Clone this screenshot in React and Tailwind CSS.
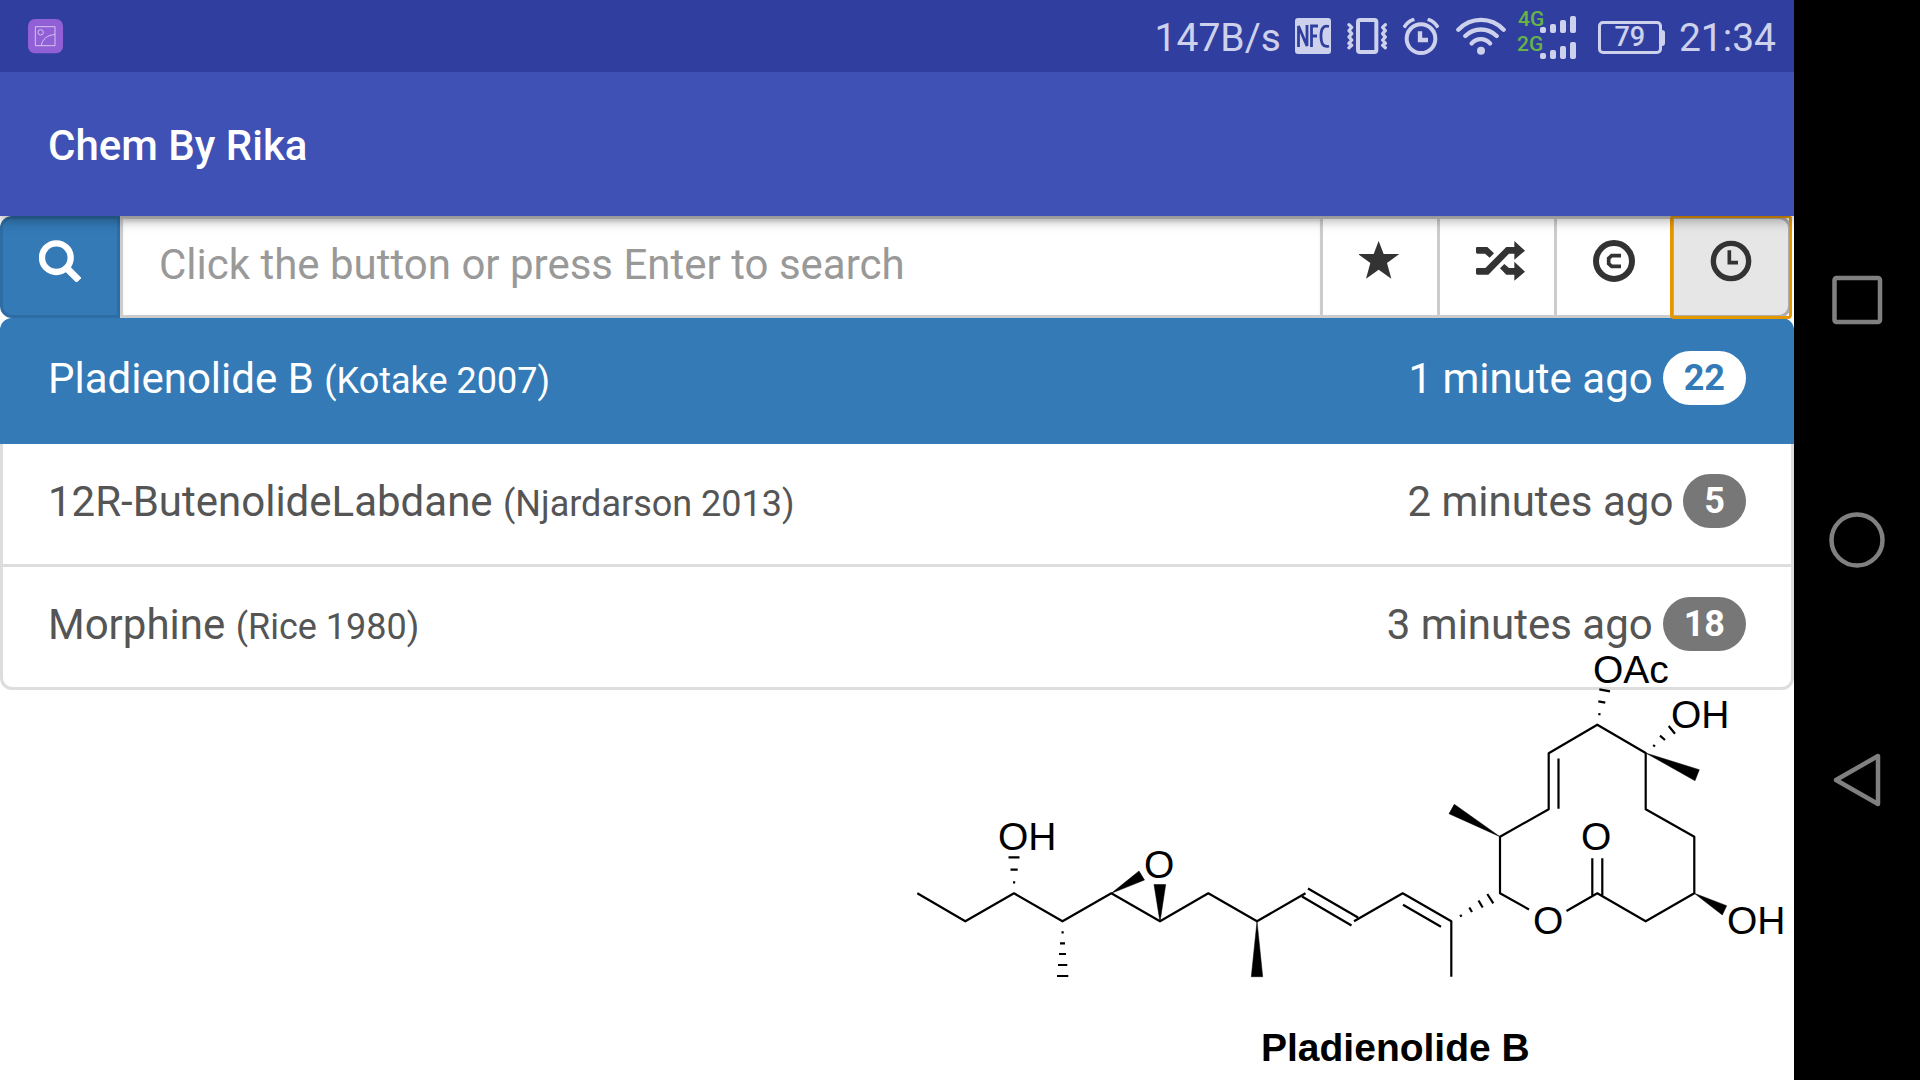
const history = [
  { name: 'Pladienolide B', source: '(Kotake 2007)', when: '1 minute ago', steps: 22, active: true },
  { name: '12R-ButenolideLabdane', source: '(Njardarson 2013)', when: '2 minutes ago', steps: 5 },
  { name: 'Morphine', source: '(Rice 1980)', when: '3 minutes ago', steps: 18 },
];

function StatusBar() {
  return (
    <div className="relative z-20 flex h-[72px] items-center bg-[#303f9f] pr-[18px] pl-7 text-[39px] leading-[60px] text-[#ced1eb]">
      <svg className="mr-auto size-[35px]" viewBox="0 0 105 105" fill="none" stroke="#d2c4ec" strokeWidth="3">
        <rect width="105" height="103" rx="21" fill="#9160d6" stroke="none" />
        <path d="M22 23H81V80H22ZM40 80C42 60 60 47 81 47" />
        <circle cx="38" cy="40" r="8" />
      </svg>
      <span className="pt-[3px]">147B/s</span>
      <svg className="ml-[14px] size-9" viewBox="0 0 36 36">
        <rect width="36" height="36" rx="3" fill="currentColor" />
        <path d="M3.500 29V8L12 28V7M16.500 29V8H23M16.500 18H22M34 8.500C28 7 26 11 26 18S28 30 34 28" fill="none" stroke="#303f9f" strokeWidth="2.800" />
      </svg>
      <svg className="ml-4 h-9 w-10" viewBox="0 0 120 108" fill="none" stroke="currentColor" strokeWidth="10" strokeLinejoin="round" strokeLinecap="round">
        <rect x="33" y="6" width="55" height="96" rx="6" strokeWidth="12" />
        <path d="M6 20l8 8-8 10 8 9-8 10 8 9-8 10 8 6-8 7M115 20l-8 8 8 10-8 9 8 10-8 9 8 10-8 6 8 7" />
      </svg>
      <svg className="ml-4 h-[37px] w-9" viewBox="0 0 108 111" fill="none" stroke="currentColor">
        <circle cx="54" cy="62" r="43" strokeWidth="12" />
        <path d="M51 40V66H75" strokeWidth="13" />
        <path d="M3 29C9 18 20 8 34 4M105 29C99 18 88 8 74 4" strokeWidth="11" />
      </svg>
      <svg className="ml-[17px] h-[38px] w-[50px]" viewBox="0 0 150 114" fill="none" stroke="currentColor" strokeWidth="13" strokeLinecap="round">
        <path d="M7 38C45 -1 105 -1 143 38M28 57C55 31 95 31 122 57M47 79C62 62 87 62 102 79" />
        <circle cx="75" cy="101" r="12" fill="currentColor" stroke="none" />
      </svg>
      <svg className="ml-[11px] h-[60px] w-[60px]" viewBox="0 0 60 60" fill="currentColor">
        <g fill="#66b447" fontFamily="Roboto, sans-serif" fontSize="21" fontWeight="500">
          <text x="1" y="20">4G</text>
          <text x="0" y="45">2G</text>
        </g>
        <rect x="23" y="21" width="6" height="6" rx="2" />
        <rect x="33" y="18" width="6" height="9" rx="2" />
        <rect x="43" y="14" width="6" height="13" rx="2" />
        <rect x="53" y="10" width="6" height="17" rx="2" />
        <rect x="23" y="47" width="6" height="6" rx="2" />
        <rect x="33" y="44" width="6" height="9" rx="2" />
        <rect x="43" y="40" width="6" height="13" rx="2" />
        <rect x="53" y="36" width="6" height="17" rx="2" />
      </svg>
      <div className="ml-[21px] flex items-center pt-[3px]">
        <span className="flex h-[33px] w-16 items-center justify-center rounded-[5px] border-[3px] border-current text-[27px] leading-[27px] font-medium">79</span>
        <span className="h-4 w-[3px] rounded-r-sm bg-current" />
      </div>
      <span className="ml-[14px] pt-[3px]">21:34</span>
    </div>
  );
}

function SearchIcon() {
  return (
    <svg className="size-[42px]" viewBox="0 0 126 126" fill="none" stroke="currentColor">
      <circle cx="52" cy="53" r="43" strokeWidth="19" />
      <path d="M82 83L120 121" strokeWidth="21" />
    </svg>
  );
}

function StarIcon() {
  return (
    <svg className="size-[42px]" viewBox="4 0 126 126" fill="currentColor">
      <path d="M63 3L78 42H125L88 69L101 116L63 89L25 116L38 69L1 42H48Z" />
    </svg>
  );
}

function RandomIcon() {
  return (
    <svg className="size-[42px] overflow-visible" viewBox="0 0 126 126" fill="currentColor">
      <path d="M0 24Q0 21 4 21H34L54 40L41 53L27 41H4Q0 41 0 37ZM4 84H28L91 21H115V3L147 32L115 59V41H99L37 104H4Q0 104 0 100V88Q0 84 4 84ZM85 72L99 84H115V65L147 95L115 122V104H91L72 85Z" />
    </svg>
  );
}

function CopyrightIcon() {
  return (
    <svg className="size-[42px]" viewBox="0 0 126 126" fill="none" stroke="currentColor">
      <circle cx="63" cy="63" r="54" strokeWidth="18" />
      <path d="M84 47H56L47 55V71L56 79H84" strokeWidth="11" />
    </svg>
  );
}

function ClockIcon() {
  return (
    <svg className="size-[42px]" viewBox="0 0 126 126" fill="none" stroke="currentColor">
      <circle cx="63" cy="63" r="53" strokeWidth="16" />
      <path d="M58 31V68H84" strokeWidth="11" />
    </svg>
  );
}

const toolButton = 'relative -ml-[3px] flex w-[120px] shrink-0 justify-center border-[3px] pt-[21px] text-[#333]';

function SearchBar() {
  return (
    <form className="mr-[3px] flex h-[102px]" onSubmit={(e) => e.preventDefault()}>
      <button aria-label="Search" className="flex w-[120px] shrink-0 justify-center rounded-l-[12px] border-[3px] border-[#2e6da4] bg-[#337ab7] pt-[21px] text-white">
        <SearchIcon />
      </button>
      <input
        type="text"
        aria-label="Search term"
        placeholder="Click the button or press Enter to search"
        className="min-w-0 flex-1 border-[3px] border-[#ccc] bg-white px-9 pb-1.5 text-[42px] text-[#555] shadow-[inset_0_3px_3px_rgba(0,0,0,0.075)] outline-none placeholder:text-[#999]"
      />
      <button type="button" aria-label="Favourites" className={`${toolButton} border-[#ccc] bg-white`}><StarIcon /></button>
      <button type="button" aria-label="Random" className={`${toolButton} border-[#ccc] bg-white`}><RandomIcon /></button>
      <button type="button" aria-label="Copyright" className={`${toolButton} border-[#ccc] bg-white`}><CopyrightIcon /></button>
      <button
        type="button"
        aria-label="History"
        aria-pressed="true"
        className={`${toolButton} z-[1] rounded-r-[12px] border-[#adadad] bg-[#e6e6e6] after:absolute after:-inset-1 after:rounded-[4px] after:border-[3px] after:border-[#e59700]`}
      >
        <ClockIcon />
      </button>
    </form>
  );
}

function HistoryList() {
  return (
    <ul className="leading-14">
      {history.map((item) => (
        <li key={item.name} className="group -mt-[3px] first:mt-0">
          <a
            href="#"
            className={
              item.active
                ? 'relative flex rounded-t-[12px] border-[3px] border-[#337ab7] bg-[#337ab7] px-[45px] pt-[30px] pb-[34px] text-[42px] text-white'
                : 'flex border-[3px] border-[#ddd] bg-white px-[45px] pt-[30px] pb-[34px] text-[42px] text-[#555] group-last:rounded-b-[12px]'
            }
          >
            <span className="flex-1">
              {item.name} <small className="text-[36px] leading-none">{item.source}</small>
            </span>
            <span>{item.when}</span>
            <span
              className={
                item.active
                  ? 'ml-[10px] h-[54px] rounded-[30px] bg-white px-[21px] text-[36px] leading-[54px] font-bold text-[#337ab7]'
                  : 'ml-[10px] h-[54px] rounded-[30px] bg-[#777] px-[21px] text-[36px] leading-[54px] font-bold text-white'
              }
            >
              {item.steps}
            </span>
          </a>
        </li>
      ))}
    </ul>
  );
}

function Molecule() {
  return (
    <svg className="pointer-events-none absolute right-0 bottom-0 h-[440px] w-[894px]" viewBox="900 640 894 440" role="img" aria-label="Structure of Pladienolide B">
      <g fill="none" stroke="#000" strokeWidth="2.200" strokeLinejoin="round">
        <path d="M917.300 893.300L965.300 921.300L1014 893.300L1062.500 921.300L1111.300 893.300L1160 921.300L1208.300 893.300L1257 921.300L1305.500 893.300" />
        <path d="M1302 896.500L1351.500 925.500M1308 888.500L1358 917.500M1354 921.300L1402.700 893.300L1451.300 921.300V976.700M1403 904.700L1441 926.700" />
        <path d="M1529 909.500L1500 893.300V836.700L1548.700 809.300V753.300L1597.300 724.700L1645.700 753V809.300L1694.300 836.700V893.300L1645.700 921.300L1597.300 893.300L1566.500 911" />
        <path d="M1558.500 758.500V808.700M1592.300 858.300V895.500M1602.300 858.300V895.500" />
        <path d="M1008.500 857.300H1019.500M1010.500 869.700H1017.700M1013 882.300H1015.200M1061.500 932.300H1063.700M1060 943.300H1065M1059 954H1066M1058 965H1067.300M1057 976H1068.300" />
        <path d="M1599.300 689.300L1610 691.300M1598.300 701.300L1605.300 702.700M1598.300 714L1600.500 714.300M1668.700 726L1675 733.700M1660 735.700L1665 740M1653.200 745L1655 746.500" />
        <path d="M1487.300 894L1493.300 903.300M1478.500 900.500L1482.700 907.500M1469.300 907.500L1472 912M1460.300 914.700L1461.500 916.700" />
      </g>
      <path d="M1111.300 893.300L1139 871L1144.500 880ZM1160 922L1154 884.500H1165.700ZM1257 921.300L1262.700 976.700H1251.300ZM1500 836.700L1454.300 804.300L1449 813.700ZM1645.700 753L1699.300 769.700L1695 780.700ZM1694.300 893.300L1726.700 905.700L1722.300 915Z" stroke="#000" strokeWidth="0.500" />
      <g fontFamily="'Liberation Sans', Arial, sans-serif" fontSize="39">
        <text x="998" y="850">OH</text>
        <text x="1144" y="878">O</text>
        <text x="1581" y="850">O</text>
        <text x="1533" y="934">O</text>
        <text x="1727" y="934">OH</text>
        <text x="1593" y="683">OAc</text>
        <text x="1671" y="728">OH</text>
        <text x="1261" y="1061" fontWeight="700">Pladienolide B</text>
      </g>
    </svg>
  );
}

function NavigationBar() {
  return (
    <nav className="flex w-[126px] shrink-0 flex-col items-center justify-center gap-[180px] bg-black text-[#808080]">
      <button aria-label="Recent apps">
        <svg className="size-[60px]" viewBox="0 0 60 60" fill="none" stroke="currentColor" strokeWidth="4.500">
          <rect x="7.500" y="8" width="45.500" height="44" rx="2" />
        </svg>
      </button>
      <button aria-label="Home">
        <svg className="size-[60px]" viewBox="0 0 60 60" fill="none" stroke="currentColor" strokeWidth="4.500">
          <circle cx="30" cy="30" r="25.500" />
        </svg>
      </button>
      <button aria-label="Back">
        <svg className="size-[60px]" viewBox="0 0 60 60" fill="none" stroke="currentColor" strokeWidth="4.500" strokeLinejoin="round">
          <path d="M9 30L51 6V54Z" />
        </svg>
      </button>
    </nav>
  );
}

export default function App() {
  return (
    <div className="flex min-h-screen bg-white font-[Roboto,sans-serif]">
      <div className="relative min-w-0 flex-1">
        <StatusBar />
        <header className="relative z-10 flex h-36 items-center bg-[#3f51b5] px-12 pt-0.5 shadow-[0_4px_12px_rgba(0,0,0,0.35)]">
          <h1 className="text-[42px] font-medium text-white">Chem By Rika</h1>
        </header>
        <main>
          <SearchBar />
          <HistoryList />
          <Molecule />
        </main>
      </div>
      <NavigationBar />
    </div>
  );
}
